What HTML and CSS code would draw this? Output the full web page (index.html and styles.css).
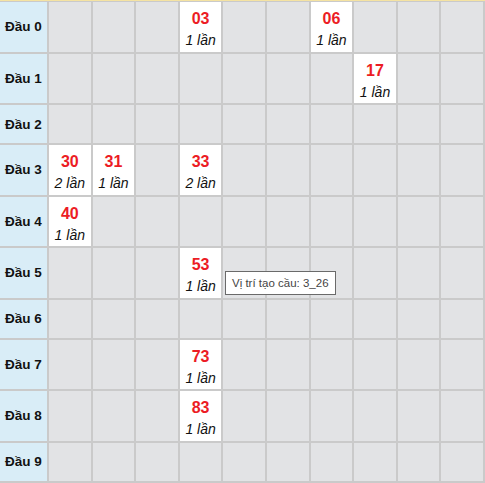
FILE: index.html
```html
<!DOCTYPE html>
<html>
<head>
<meta charset="utf-8">
<link rel="stylesheet" href="styles.css">
</head>
<body>
<div class="board">
  <div class="grid">
    <div class="head">Đầu 0</div>
    <div class="c"></div><div class="c"></div><div class="c"></div>
    <div class="c hit"><span class="num">03</span><span class="cnt">1 lần</span></div>
    <div class="c"></div><div class="c"></div>
    <div class="c hit"><span class="num">06</span><span class="cnt">1 lần</span></div>
    <div class="c"></div><div class="c"></div><div class="c"></div>

    <div class="head">Đầu 1</div>
    <div class="c"></div><div class="c"></div><div class="c"></div><div class="c"></div><div class="c"></div><div class="c"></div><div class="c"></div>
    <div class="c hit"><span class="num">17</span><span class="cnt">1 lần</span></div>
    <div class="c"></div><div class="c"></div>

    <div class="head short">Đầu 2</div>
    <div class="c"></div><div class="c"></div><div class="c"></div><div class="c"></div><div class="c"></div><div class="c"></div><div class="c"></div><div class="c"></div><div class="c"></div><div class="c"></div>

    <div class="head">Đầu 3</div>
    <div class="c hit"><span class="num">30</span><span class="cnt">2 lần</span></div>
    <div class="c hit"><span class="num">31</span><span class="cnt">1 lần</span></div>
    <div class="c"></div>
    <div class="c hit"><span class="num">33</span><span class="cnt">2 lần</span></div>
    <div class="c"></div><div class="c"></div><div class="c"></div><div class="c"></div><div class="c"></div><div class="c"></div>

    <div class="head">Đầu 4</div>
    <div class="c hit"><span class="num">40</span><span class="cnt">1 lần</span></div>
    <div class="c"></div><div class="c"></div><div class="c"></div><div class="c"></div><div class="c"></div><div class="c"></div><div class="c"></div><div class="c"></div><div class="c"></div>

    <div class="head">Đầu 5</div>
    <div class="c"></div><div class="c"></div><div class="c"></div>
    <div class="c hit"><span class="num">53</span><span class="cnt">1 lần</span></div>
    <div class="c"></div><div class="c"></div><div class="c"></div><div class="c"></div><div class="c"></div><div class="c"></div>

    <div class="head short">Đầu 6</div>
    <div class="c"></div><div class="c"></div><div class="c"></div><div class="c"></div><div class="c"></div><div class="c"></div><div class="c"></div><div class="c"></div><div class="c"></div><div class="c"></div>

    <div class="head">Đầu 7</div>
    <div class="c"></div><div class="c"></div><div class="c"></div>
    <div class="c hit"><span class="num">73</span><span class="cnt">1 lần</span></div>
    <div class="c"></div><div class="c"></div><div class="c"></div><div class="c"></div><div class="c"></div><div class="c"></div>

    <div class="head">Đầu 8</div>
    <div class="c"></div><div class="c"></div><div class="c"></div>
    <div class="c hit"><span class="num">83</span><span class="cnt">1 lần</span></div>
    <div class="c"></div><div class="c"></div><div class="c"></div><div class="c"></div><div class="c"></div><div class="c"></div>

    <div class="head short">Đầu 9</div>
    <div class="c"></div><div class="c"></div><div class="c"></div><div class="c"></div><div class="c"></div><div class="c"></div><div class="c"></div><div class="c"></div><div class="c"></div><div class="c"></div>
  </div>
  <div class="tooltip">Vị trí tạo cầu: 3_26</div>
</div>
</body>
</html>
```
FILE: styles.css
```css
html, body {
  margin: 0;
  padding: 0;
  background: #ffffff;
}
body {
  font-family: "Liberation Sans", Arial, sans-serif;
}
.board {
  position: relative;
  width: 485px;
  border-top: 1px solid #f5e3a2;
}
.grid {
  display: grid;
  grid-template-columns: 47px repeat(10, 1fr);
  grid-template-rows: 49.5px 49.5px 38px 49.5px 49.5px 49.5px 38px 49.5px 49.5px 38px;
  column-gap: 2px;
  row-gap: 2px;
  padding: 1px 2px 2px 0;
  background: #cacaca;
}
.head {
  background: #d9edf7;
  display: flex;
  align-items: center;
  justify-content: center;
  font-weight: bold;
  font-size: 13.5px;
  color: #111;
}
.c {
  background: #e2e3e5;
}
.c.hit {
  background: #ffffff;
  display: flex;
  flex-direction: column;
  align-items: center;
  padding-top: 7px;
  box-sizing: border-box;
}
.num {
  font-weight: bold;
  font-size: 16px;
  line-height: 20px;
  color: #ec1c24;
}
.cnt {
  font-style: italic;
  font-size: 14px;
  line-height: 22px;
  color: #111;
}
.tooltip {
  position: absolute;
  left: 225px;
  top: 270px;
  box-sizing: border-box;
  height: 24px;
  padding: 0 6px;
  display: flex;
  align-items: center;
  background: #ffffff;
  border: 1px solid #6a6a6a;
  font-size: 11.5px;
  color: #444;
  white-space: nowrap;
}
```
